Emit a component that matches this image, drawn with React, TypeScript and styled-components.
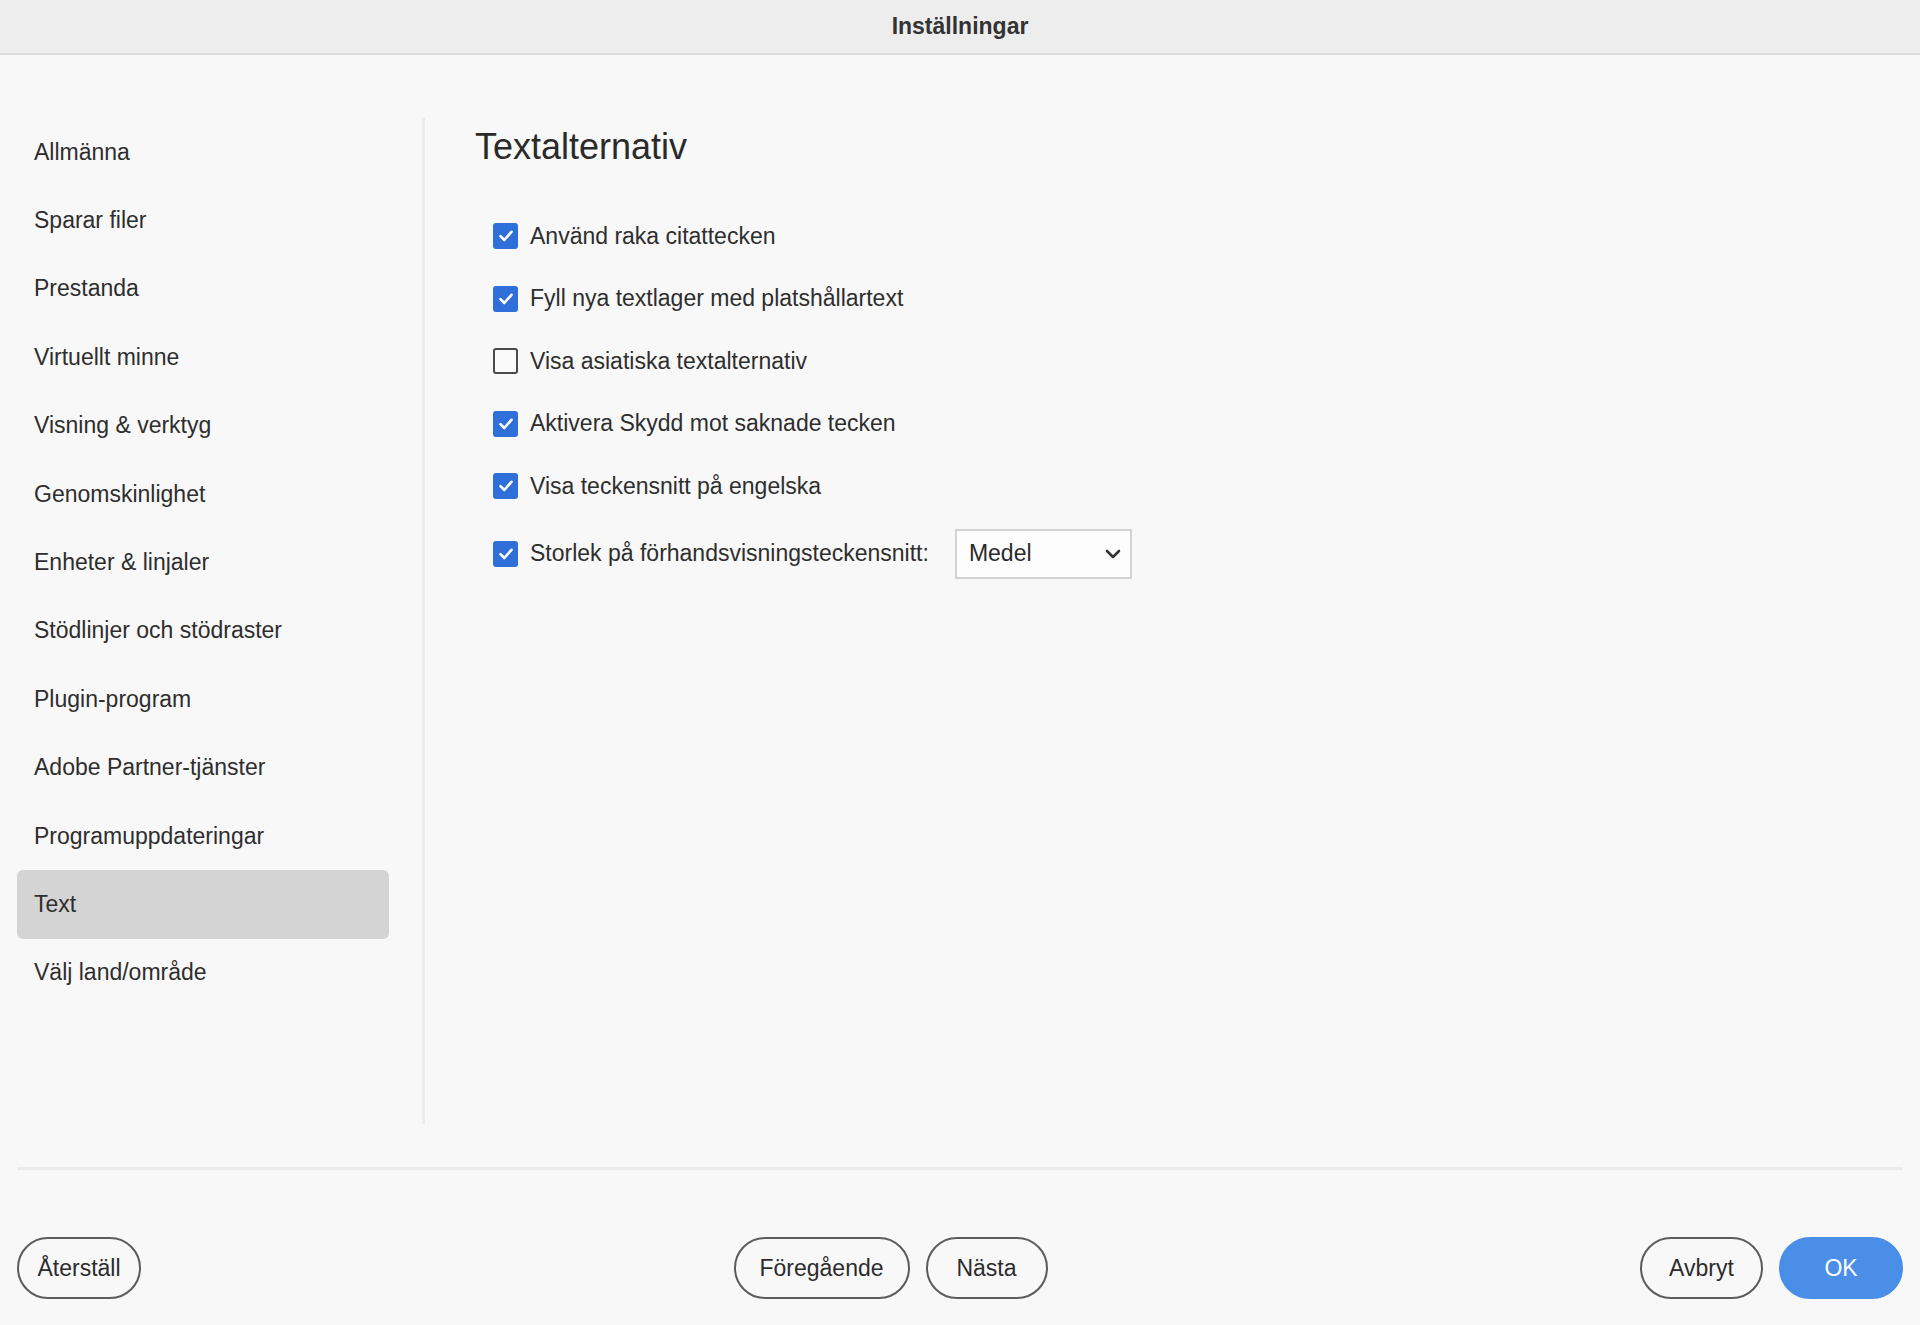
import React from 'react';
import styled, { createGlobalStyle } from 'styled-components';

const GlobalStyle = createGlobalStyle`
  html, body {
    margin: 0;
    padding: 0;
    background: #f8f8f8;
  }
  body {
    font-family: 'Liberation Sans', Arial, sans-serif;
    color: #2c2c2c;
  }
`;

const StyledWindow = styled.div`
  display: flex;
  flex-direction: column;
  width: 1920px;
  height: 1325px;
  background: #f8f8f8;
  box-sizing: border-box;
`;

const StyledTitleBar = styled.header`
  display: flex;
  align-items: center;
  justify-content: center;
  height: 55px;
  flex-shrink: 0;
  box-sizing: border-box;
  background: #ededed;
  border-bottom: 2px solid #dcdcdc;
  font-size: 23px;
  font-weight: 700;
  color: #333;
`;

const StyledBody = styled.div`
  display: flex;
  flex: 1;
  min-height: 0;
`;

const StyledSidebar = styled.nav`
  display: flex;
  flex-direction: column;
  width: 372px;
  height: 1006px;
  margin-top: 63px;
  padding-left: 17px;
  padding-right: 33px;
  box-sizing: content-box;
  border-right: 3px solid #ececec;
  flex-shrink: 0;
`;

const StyledNavItem = styled.div<{ $active?: boolean }>`
  display: flex;
  align-items: center;
  height: 68.4px;
  padding-left: 17px;
  box-sizing: border-box;
  border-radius: 6px;
  font-size: 23px;
  color: #2e2e2e;
  background: ${({ $active }) => ($active ? '#d4d4d4' : 'transparent')};
`;

const StyledMain = styled.main`
  flex: 1;
  padding: 70px 0 0 50px;
`;

const StyledHeading = styled.h1`
  margin: 0 0 36px;
  font-size: 36px;
  line-height: 44px;
  font-weight: 400;
  color: #2a2a2a;
`;

const StyledOptionList = styled.div`
  display: flex;
  flex-direction: column;
  padding-left: 18px;
`;

const StyledOption = styled.label<{ $tall?: boolean }>`
  display: flex;
  align-items: center;
  gap: 12px;
  height: ${({ $tall }) => ($tall ? '72px' : '62.5px')};
  font-size: 23px;
  color: #2e2e2e;
`;

const StyledCheckbox = styled.span<{ $checked?: boolean }>`
  display: inline-flex;
  align-items: center;
  justify-content: center;
  width: 25px;
  height: 26px;
  box-sizing: border-box;
  border-radius: 3px;
  background: ${({ $checked }) => ($checked ? '#2f6fd9' : '#fafafa')};
  border: ${({ $checked }) => ($checked ? 'none' : '2.5px solid #4a4a4a')};
  flex-shrink: 0;
`;

const StyledSelect = styled.div`
  display: flex;
  align-items: center;
  justify-content: space-between;
  width: 177px;
  height: 50px;
  margin-left: 14px;
  padding: 0 8px 0 12px;
  box-sizing: border-box;
  background: #fdfdfd;
  border: 2px solid #d2d2d2;
  font-size: 23px;
  color: #2a2a2a;
`;

const StyledRule = styled.hr`
  margin: 0 17px;
  height: 3px;
  border: none;
  background: #ebebeb;
  flex-shrink: 0;
`;

const StyledFooter = styled.footer`
  display: flex;
  justify-content: space-between;
  align-items: center;
  padding: 67px 17px 26px;
  flex-shrink: 0;
`;

const StyledButtonGroup = styled.div`
  display: flex;
  gap: 16px;
`;

const StyledButton = styled.button<{ $primary?: boolean; $width: number }>`
  width: ${({ $width }) => $width}px;
  height: 62px;
  box-sizing: border-box;
  border-radius: 31px;
  font-family: 'Liberation Sans', Arial, sans-serif;
  font-size: 23px;
  color: ${({ $primary }) => ($primary ? '#ffffff' : '#2c2c2c')};
  background: ${({ $primary }) => ($primary ? '#4a8ee8' : 'transparent')};
  border: 2px solid ${({ $primary }) => ($primary ? '#4a8ee8' : '#5c5c5c')};
  padding: 0;
  cursor: pointer;
`;

const navItems = [
  'Allmänna',
  'Sparar filer',
  'Prestanda',
  'Virtuellt minne',
  'Visning & verktyg',
  'Genomskinlighet',
  'Enheter & linjaler',
  'Stödlinjer och stödraster',
  'Plugin-program',
  'Adobe Partner-tjänster',
  'Programuppdateringar',
  'Text',
  'Välj land/område',
];

const options = [
  { label: 'Använd raka citattecken', checked: true },
  { label: 'Fyll nya textlager med platshållartext', checked: true },
  { label: 'Visa asiatiska textalternativ', checked: false },
  { label: 'Aktivera Skydd mot saknade tecken', checked: true },
  { label: 'Visa teckensnitt på engelska', checked: true },
];

const CheckMark = () => (
  <svg width="16" height="14" viewBox="0 0 16 14" fill="none">
    <path d="M2.5 7.2 L6.3 11 L13.5 2.8" stroke="#fff" strokeWidth="2.6" strokeLinecap="round" strokeLinejoin="round" />
  </svg>
);

const Checkbox: React.FC<{ checked: boolean }> = ({ checked }) => (
  <StyledCheckbox $checked={checked}>{checked && <CheckMark />}</StyledCheckbox>
);

const Chevron = () => (
  <svg width="18" height="12" viewBox="0 0 18 12" fill="none">
    <path d="M3 3 L9 9 L15 3" stroke="#333" strokeWidth="2.6" strokeLinecap="round" strokeLinejoin="round" />
  </svg>
);

const App: React.FC = () => {
  return (
    <StyledWindow>
      <GlobalStyle />
      <StyledTitleBar>Inställningar</StyledTitleBar>
      <StyledBody>
        <StyledSidebar>
          {navItems.map((item) => (
            <StyledNavItem key={item} $active={item === 'Text'}>
              {item}
            </StyledNavItem>
          ))}
        </StyledSidebar>
        <StyledMain>
          <StyledHeading>Textalternativ</StyledHeading>
          <StyledOptionList>
            {options.map((opt) => (
              <StyledOption key={opt.label}>
                <Checkbox checked={opt.checked} />
                {opt.label}
              </StyledOption>
            ))}
            <StyledOption $tall>
              <Checkbox checked />
              Storlek på förhandsvisningsteckensnitt:
              <StyledSelect>
                Medel
                <Chevron />
              </StyledSelect>
            </StyledOption>
          </StyledOptionList>
        </StyledMain>
      </StyledBody>
      <StyledRule />
      <StyledFooter>
        <StyledButton $width={124}>Återställ</StyledButton>
        <StyledButtonGroup>
          <StyledButton $width={176}>Föregående</StyledButton>
          <StyledButton $width={122}>Nästa</StyledButton>
        </StyledButtonGroup>
        <StyledButtonGroup>
          <StyledButton $width={123}>Avbryt</StyledButton>
          <StyledButton $width={124} $primary>OK</StyledButton>
        </StyledButtonGroup>
      </StyledFooter>
    </StyledWindow>
  );
};

export default App;
